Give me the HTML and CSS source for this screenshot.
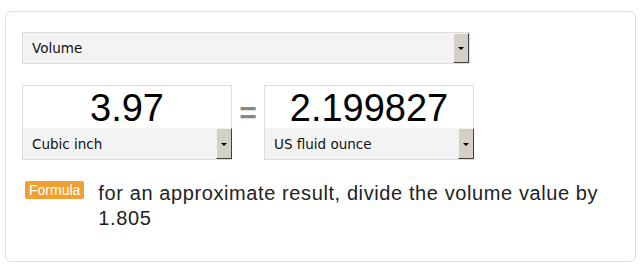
FILE: index.html
```html
<!DOCTYPE html>
<html>
    <head>
        <link rel="stylesheet" href="styles.css">
    </head>

    <body>
        <div class="card">
            <div class="select wide">
                <span class="label">Volume</span>
                <span class="arrow"></span>
            </div>

            <div class="convert">
                <div class="box">
                    <div class="value">3.97</div>
                    <div class="select unit">
                        <span class="label">Cubic inch</span>
                        <span class="arrow"></span>
                    </div>
                </div>
                <div class="equals">=</div>
                <div class="box">
                    <div class="value">2.199827</div>
                    <div class="select unit">
                        <span class="label">US fluid ounce</span>
                        <span class="arrow"></span>
                    </div>
                </div>
            </div>

            <div class="formula">
                <span class="badge">Formula</span>
                <p>for an approximate result, divide the volume value by 1.805</p>
            </div>
        </div>
    </body>
</html>
```

FILE: styles.css
```css
body {
    margin: 0;
    font-family: "Liberation Sans", Arial, sans-serif;
    color: #222;
    background: #fff;
}

.card {
    margin: 11px 0 0 5px;
    width: 631px;
    height: 251px;
    box-sizing: border-box;
    border: 1px solid #ddd;
    border-radius: 6px;
    padding: 20px 0 0 16px;
}

.select {
    display: flex;
    align-items: stretch;
    background: #f3f3f3;
    font-family: "DejaVu Sans", Tahoma, sans-serif;
    font-size: 13.5px;
    color: #111;
}

.select .label {
    flex: 1;
    display: flex;
    align-items: center;
    padding-left: 9px;
}

.arrow {
    width: 16px;
    box-sizing: border-box;
    background: #d4d0c8;
    border-top: 1px solid #f4f3ee;
    border-left: 1px solid #f4f3ee;
    border-right: 1px solid #404040;
    border-bottom: 1px solid #404040;
    display: flex;
    align-items: center;
    justify-content: center;
}

.arrow::after {
    content: "";
    border-left: 3px solid transparent;
    border-right: 3px solid transparent;
    border-top: 3px solid #000;
    margin-top: 1px;
}

.wide {
    width: 448px;
    height: 32px;
    box-sizing: border-box;
    border: 1px solid #ddd;
}

.convert {
    display: flex;
    margin-top: 21px;
}

.box {
    width: 210px;
    height: 75px;
    box-sizing: border-box;
    border: 1px solid #ddd;
    display: flex;
    flex-direction: column;
}

.value {
    height: 42px;
    text-align: center;
    font-size: 38px;
    line-height: 44px;
    color: #000;
}

.unit {
    flex: 1;
}

.unit .arrow {
    margin-right: -1px;
}

.equals {
    width: 32px;
    text-align: center;
    font-size: 30px;
    font-weight: bold;
    color: #888;
    line-height: 56px;
}

.formula {
    display: flex;
    align-items: flex-start;
    margin-top: 21px;
    margin-left: 3px;
}

.badge {
    background: #f0a030;
    color: #fff;
    font-size: 14px;
    padding: 1px 4px;
    border-radius: 2px;
    line-height: 16px;
}

.formula p {
    margin: 0 0 0 14px;
    font-size: 20px;
    letter-spacing: 0.6px;
    line-height: 25px;
    width: 515px;
}
```
